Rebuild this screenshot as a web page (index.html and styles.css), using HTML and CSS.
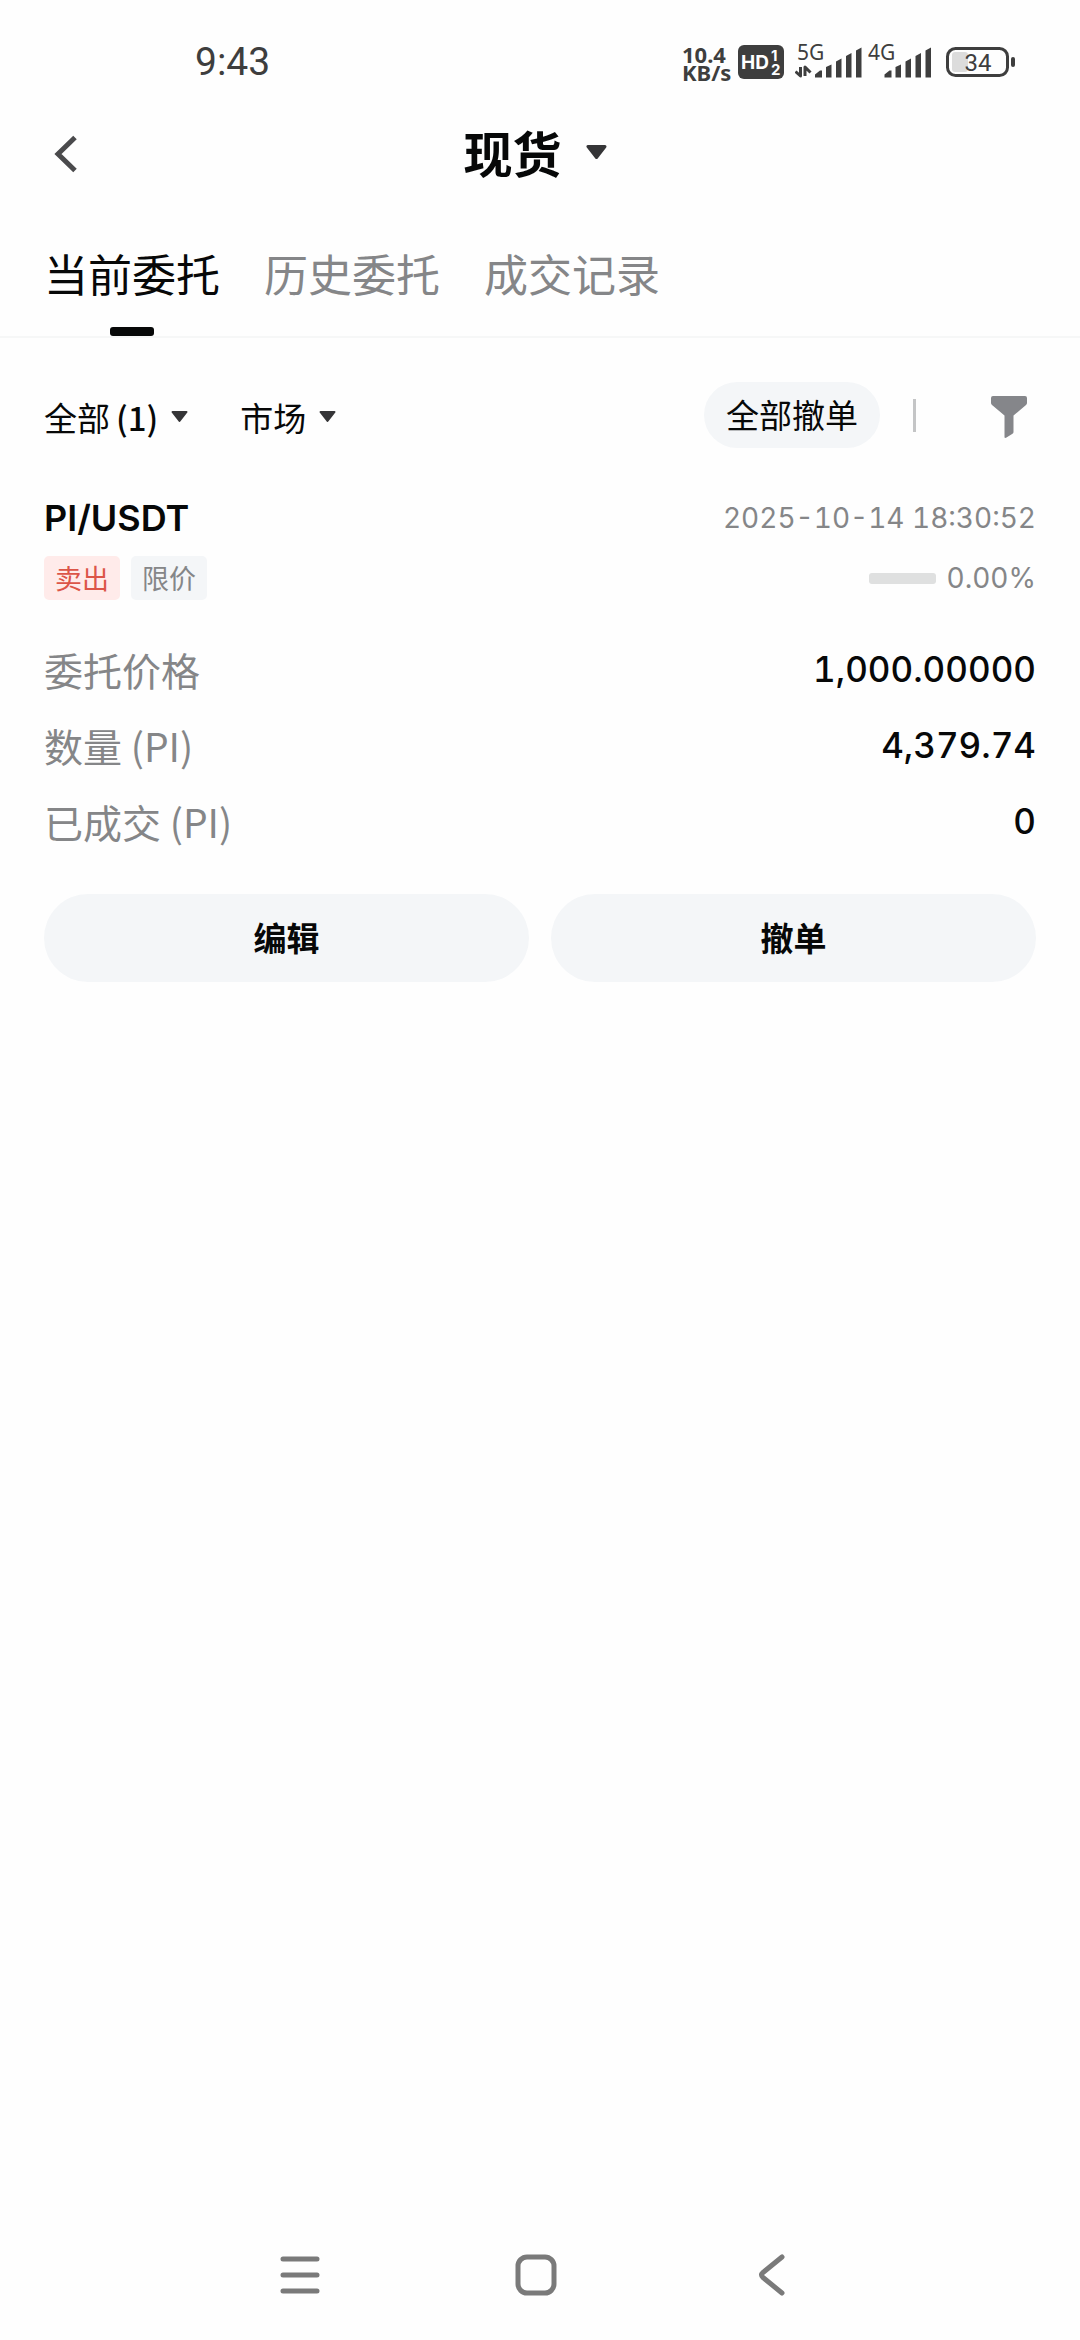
FILE: index.html
```html
<!DOCTYPE html>
<html lang="zh-CN">
<head>
<meta charset="utf-8">
<meta name="viewport" content="width=device-width, initial-scale=1">
<title>现货</title>
<link rel="stylesheet" href="styles.css">
</head>
<body>
<div class="app">
  <div class="status-bar">
    <span class="clock">9:43</span>
    <div class="status-icons">
      <div class="net-speed"><span>10.4</span><span>KB/s</span></div>
      <svg class="hd" width="46" height="34" viewBox="0 0 46 34" aria-hidden="true">
        <rect width="46" height="34" rx="6" fill="#3e3e3e"/>
        <text x="3" y="24" class="hd-main">HD</text>
        <text x="33" y="16" class="hd-sub">1</text>
        <text x="33" y="30" class="hd-sub">2</text>
      </svg>
      <svg class="signal" width="67" height="56" viewBox="0 -10 67 56" aria-hidden="true">
        <text x="2" y="16" class="signal-text">5G</text>
        <path d="M5.500 23V32L.5 27.500M10 32V23L15.500 28.500" fill="none" stroke="#3e3e3e" stroke-width="3" stroke-linejoin="round"/>
        <path d="M20 33.500V30.500L25 26.500H27V33.500ZM31 33.500V23L36.500 20.500V33.500ZM41 33.500V17.500L46.500 14.500V33.500ZM51 33.500V12L56.500 9V33.500ZM61 33.500V6.500L66.500 3.500V33.500Z" fill="#3e3e3e"/>
      </svg>
      <svg class="signal second" width="64" height="56" viewBox="0 -10 64 56" aria-hidden="true">
        <text x="0" y="16" class="signal-text">4G</text>
        <path d="M16.500 33.500V30.500L21.500 26.500H23.500V33.500ZM27.500 33.500V23L33 20.500V33.500ZM37.500 33.500V17.500L43 14.500V33.500ZM47.500 33.500V12L53 9V33.500ZM57.500 33.500V6.500L63 3.500V33.500Z" fill="#3e3e3e"/>
      </svg>
      <svg class="battery" width="70" height="40" viewBox="0 -5 70 40" aria-hidden="true">
        <rect x="6" y="5" width="16" height="20" rx="3" fill="#dcdcdc"/>
        <rect x="1.500" y="1.500" width="60" height="27" rx="8" fill="none" stroke="#3e3e3e" stroke-width="3"/>
        <rect x="65" y="10" width="4" height="10" rx="2" fill="#3e3e3e"/>
        <text x="32" y="24" text-anchor="middle" class="battery-text">34</text>
      </svg>
    </div>
  </div>

  <header class="header">
    <button class="back" aria-label="返回">
      <svg width="24" height="38" viewBox="0 0 24 38"><path d="M21 2.500 4 19 21 35.500" fill="none" stroke="#4a4a4c" stroke-width="5"/></svg>
    </button>
    <button class="title">现货
      <svg width="21" height="15" viewBox="0 0 21 15"><path d="M2 1.500H19L10.500 12.500Z" fill="#353537" stroke="#353537" stroke-width="3" stroke-linejoin="round"/></svg>
    </button>
  </header>

  <nav class="tabs">
    <a class="tab active" href="#current">当前委托</a>
    <a class="tab" href="#history">历史委托</a>
    <a class="tab" href="#trades">成交记录</a>
  </nav>

  <main class="content">
    <div class="filters">
      <button class="filter">全部<span class="count">(1)</span>
        <svg width="17" height="12" viewBox="0 0 17 12"><path d="M1.500 1H15.500L8.500 10Z" fill="#353537" stroke="#353537" stroke-width="2" stroke-linejoin="round"/></svg>
      </button>
      <button class="filter">市场
        <svg width="17" height="12" viewBox="0 0 17 12"><path d="M1.500 1H15.500L8.500 10Z" fill="#353537" stroke="#353537" stroke-width="2" stroke-linejoin="round"/></svg>
      </button>
      <button class="cancel-all">全部撤单</button>
      <span class="divider"></span>
      <button class="funnel" aria-label="筛选">
        <svg width="38" height="44" viewBox="0 0 38 44"><path d="M3 1H35Q37 1 37 3V8Q37 9 36 10L23.500 20.500V37Q23.500 38 22.500 38.700L16.500 42.500Q14.500 43.500 14.500 42V20.500L2 10Q1 9 1 8V3Q1 1 3 1Z" fill="#85868a"/></svg>
      </button>
    </div>

    <article class="order">
      <div class="row order-head">
        <h2 class="pair">PI/USDT</h2>
        <time class="meta">2025-10-14 18:30:52</time>
      </div>
      <div class="row order-tags">
        <div class="tag-list"><span class="tag sell">卖出</span><span class="tag">限价</span></div>
        <div class="progress"><span class="track"></span><span class="meta">0.00%</span></div>
      </div>
      <dl class="details">
        <div class="row"><dt>委托价格</dt><dd>1,000.00000</dd></div>
        <div class="row"><dt>数量 (PI)</dt><dd>4,379.74</dd></div>
        <div class="row"><dt>已成交 (PI)</dt><dd>0</dd></div>
      </dl>
      <div class="actions">
        <button class="action">编辑</button>
        <button class="action">撤单</button>
      </div>
    </article>
  </main>

  <div class="system-nav">
    <button aria-label="最近任务"><svg width="40" height="42" viewBox="0 0 40 42"><path d="M3 5H37M3 21H37M3 37H37" stroke="#7a7a7a" stroke-width="5" stroke-linecap="round"/></svg></button>
    <button aria-label="主屏幕"><svg width="42" height="42" viewBox="0 0 42 42"><rect x="3" y="3" width="36" height="36" rx="9" fill="none" stroke="#7a7a7a" stroke-width="5"/></svg></button>
    <button aria-label="返回"><svg width="28" height="42" viewBox="0 0 28 42"><path d="M24 3 5 18.500Q2 21 5 23.500L24 39" fill="none" stroke="#7a7a7a" stroke-width="5" stroke-linecap="round"/></svg></button>
  </div>
</div>
</body>
</html>
```
FILE: styles.css
```css
* {
  box-sizing: border-box;
}

body {
  margin: 0;
  background: #fefefe;
  color: #070808;
  font-family: "Noto Sans CJK SC", sans-serif;
}

button {
  margin: 0;
  padding: 0;
  border: 0;
  background: none;
  color: inherit;
  font: inherit;
  cursor: pointer;
}

svg {
  display: block;
  flex: none;
}

.app {
  display: flex;
  flex-direction: column;
  min-height: 100vh;
}

.status-bar {
  display: flex;
  align-items: center;
  justify-content: space-between;
  height: 110px;
  padding: 14px 64px 0 195px;
  color: #3e3e3e;
}

.clock {
  font: 400 39px/44px Roboto, sans-serif;
}

.status-icons {
  display: flex;
  align-items: center;
}

.net-speed {
  display: flex;
  flex-direction: column;
  width: 56px;
  padding-top: 2px;
  font: 700 22px/18px "Noto Sans", sans-serif;
}

.signal {
  margin-left: 11px;
}

.signal.second {
  margin-left: 6px;
}

.battery {
  margin-left: 14px;
}

.hd-main {
  fill: #fff;
  font: 700 19px Inter, sans-serif;
}

.hd-sub {
  fill: #fff;
  font: 700 15px Inter, sans-serif;
}

.signal-text {
  fill: #3e3e3e;
  font: 400 21px "Noto Sans", sans-serif;
}

.battery-text {
  fill: #3e3e3e;
  font: 400 24px Roboto, sans-serif;
}

.header {
  display: grid;
  grid-template-columns: 1fr auto 1fr;
  align-items: center;
  height: 88px;
  padding: 0 54px;
}

.back {
  justify-self: start;
}

.title {
  display: flex;
  align-items: center;
  gap: 24px;
  padding: 0 10px 4px 0;
  font-size: 49px;
  font-weight: 700;
  line-height: 72px;
}

.tabs {
  display: flex;
  gap: 44px;
  height: 140px;
  padding: 0 44px;
  border-bottom: 2px solid #f6f7f7;
}

.tab {
  display: flex;
  flex-direction: column;
  align-items: center;
  justify-content: space-between;
  padding-top: 43px;
  color: #858688;
  font-size: 44px;
  line-height: 64px;
  text-decoration: none;
}

.tab.active {
  color: #070808;
}

.tab.active::after {
  content: "";
  width: 44px;
  height: 9px;
  border-radius: 3px;
  background: #070808;
}

.content {
  flex: 1;
  padding: 44px;
}

.filters {
  display: flex;
  align-items: center;
  height: 66px;
  font-size: 33px;
  line-height: 48px;
}

.filter {
  display: flex;
  align-items: center;
  margin-right: 52px;
  padding-top: 4px;
}

.filter svg {
  margin-left: 13px;
}

.count {
  margin-left: 6px;
  font-weight: 500;
}

.cancel-all {
  height: 66px;
  margin-left: auto;
  padding: 0 22px 2px;
  border-radius: 33px;
  background: #f4f6f8;
}

.divider {
  width: 3px;
  height: 33px;
  margin: 0 74px 0 33px;
  background: #c4c5c6;
}

.funnel {
  padding: 4px 8px 0 0;
}

.row {
  display: flex;
  align-items: center;
  justify-content: space-between;
}

.order-head {
  height: 52px;
  margin-top: 44px;
}

.pair {
  margin: 0;
  font: 600 36px/52px Inter, sans-serif;
}

.meta {
  color: #858688;
  font: 400 28px/44px Inter, sans-serif;
  font-variant-numeric: tabular-nums;
}

.order-tags {
  margin-top: 12px;
}

.tag-list {
  display: flex;
  gap: 11px;
}

.tag {
  padding: 0 11px;
  border-radius: 5px;
  background: #f4f6f8;
  color: #858688;
  font-size: 27px;
  line-height: 44px;
}

.tag.sell {
  background: #ffebea;
  color: #dc5548;
}

.progress {
  display: flex;
  align-items: center;
  gap: 11px;
}

.track {
  width: 67px;
  height: 11px;
  border-radius: 3px;
  background: #dfe0e0;
}

.details {
  display: grid;
  gap: 20px;
  margin: 41px 0 0;
}

dt {
  color: #858688;
  font-size: 39px;
  line-height: 56px;
}

dd {
  margin: 0;
  font: 500 35px/56px Inter, sans-serif;
  font-variant-numeric: tabular-nums;
}

.actions {
  display: grid;
  grid-template-columns: 1fr 1fr;
  gap: 22px;
  margin-top: 45px;
}

.action {
  height: 88px;
  padding-bottom: 2px;
  border-radius: 44px;
  background: #f4f6f8;
  font-size: 33px;
  font-weight: 700;
}

.system-nav {
  display: flex;
  justify-content: center;
  gap: 156px;
  height: 130px;
  padding-right: 8px;
}

.system-nav button {
  display: flex;
  align-items: center;
  justify-content: center;
  width: 80px;
}
```
